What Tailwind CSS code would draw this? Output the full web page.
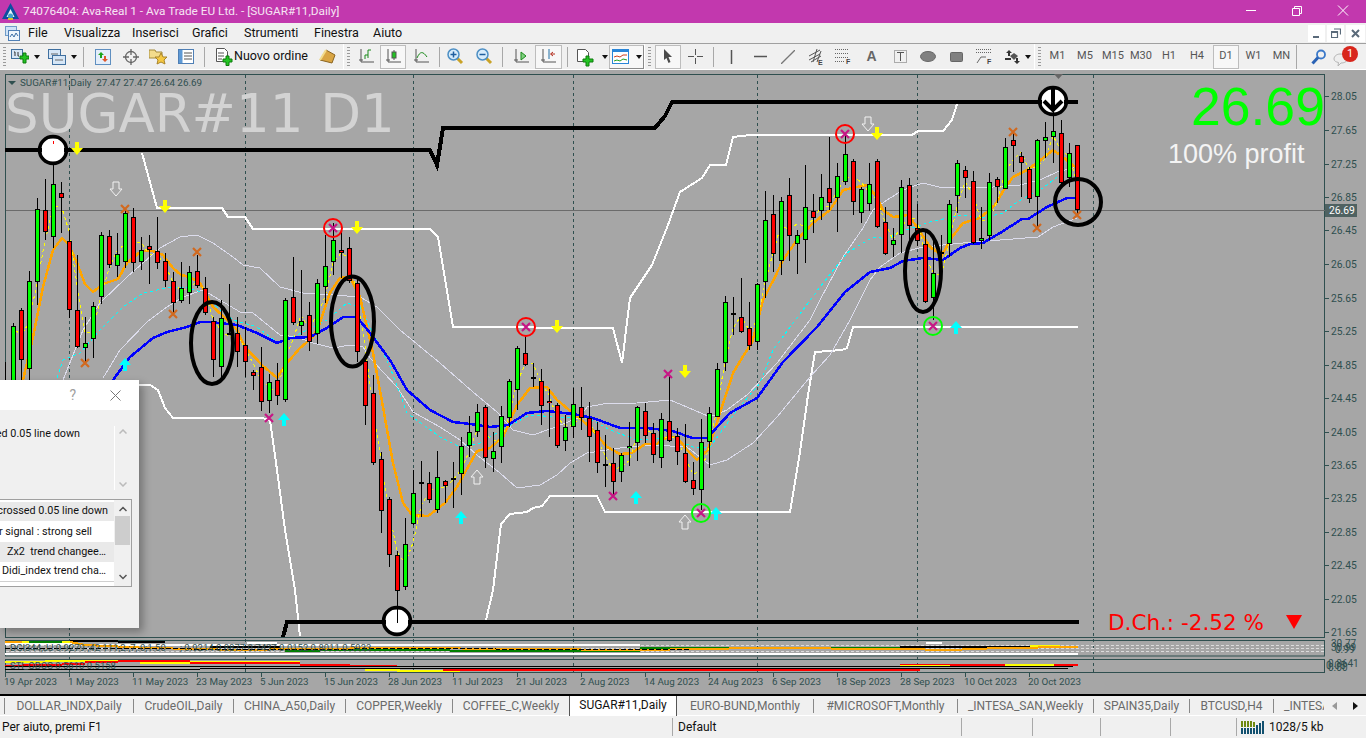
<!DOCTYPE html>
<html lang="it">
<head>
  <meta charset="UTF-8" />
  <title>74076404: Ava-Real 1 - Ava Trade EU Ltd. - [SUGAR#11,Daily]</title>
  <script src="https://cdn.jsdelivr.net/npm/@tailwindcss/browser@4"></script>
</head>
<body class="w-[1366px] h-[738px] overflow-hidden bg-[#f0f0f0] font-['Roboto',sans-serif] text-[12px] text-black">
<div class="flex flex-col h-[738px]">

  <!-- title bar -->
  <div class="h-[23px] bg-[#c238ae] flex items-center text-white shrink-0">
    <svg class="ml-[2px] w-[17px] h-[17px]" viewBox="0 0 17 17"><path d="M8.500 0 L17 16 H0 Z" fill="#0d4fa0"/><path d="M8.500 6 L12.500 14 H4.500 Z" fill="#e8f4f8"/><circle cx="8.500" cy="13" r="2.500" fill="#3fa3c9"/><path d="M6 15h5v2H6z" fill="#d8c22a"/></svg>
    <span class="ml-[4px] text-[11.800px] text-[#f6e4f3] whitespace-nowrap">74076404: Ava-Real 1 - Ava Trade EU Ltd. - [SUGAR#11,Daily]</span>
    <div class="ml-auto flex items-center">
      <svg class="w-[46px] h-[23px]" viewBox="0 0 46 23"><path d="M18 10.500h10" stroke="#fff"/></svg>
      <svg class="w-[46px] h-[23px]" viewBox="0 0 46 23" fill="none" stroke="#fff"><path d="M18.500 8.500h7v7h-7zM20.500 8.500v-2h7v7h-2"/></svg>
      <svg class="w-[46px] h-[23px]" viewBox="0 0 46 23" fill="none" stroke="#fff"><path d="M18 5.500l10 10M28 5.500l-10 10"/></svg>
    </div>
  </div>

  <!-- menu bar -->
  <div class="h-[21px] border-b border-[#a0a0a0] flex items-center shrink-0 text-[12.500px] text-[#111]">
    <span class="w-[28px] pl-[5px]"><svg class="w-[15px] h-[15px]" viewBox="0 0 15 15" fill="none"><rect x="0.500" y="0.500" width="11" height="9" fill="#cfe3f7" stroke="#6f9bc8"/><rect x="3.500" y="4.500" width="11" height="10" fill="#eef5fc" stroke="#4f7fb5"/><path d="M5 11l2-3 2 3 2-4 2 3" stroke="#3b6ea5"/></svg></span>
    <span class="w-[36px]">File</span>
    <span class="w-[68px]">Visualizza</span>
    <span class="w-[60px]">Inserisci</span>
    <span class="w-[52px]">Grafici</span>
    <span class="w-[70px]">Strumenti</span>
    <span class="w-[59px]">Finestra</span>
    <span>Aiuto</span>
    <div class="ml-auto flex gap-[2px] pr-[1px]">
      <span class="w-[17px] h-[17px] bg-white flex items-center justify-center"><svg class="w-[9px] h-[9px]" viewBox="0 0 9 9"><path d="M1 7h6v2H1z" fill="#5a6a7a"/></svg></span>
      <span class="w-[17px] h-[17px] bg-white flex items-center justify-center"><svg class="w-[10px] h-[10px]" viewBox="0 0 10 10" fill="none" stroke="#5a6a7a" stroke-width="1.200"><path d="M.5 3.500h6v6h-6zM3 1h6.500v5.500"/><path d="M.5 4h6" stroke-width="2"/></svg></span>
      <span class="w-[19px] h-[17px] bg-white flex items-center justify-center"><svg class="w-[9px] h-[9px]" viewBox="0 0 9 9" stroke="#5a6a7a" stroke-width="2"><path d="M1 1l7 7M8 1l-7 7"/></svg></span>
    </div>
  </div>

  <!-- toolbar -->
  <div class="h-[26px] flex items-center shrink-0 text-[#4a4a4a] border-b border-white">
    <span class="w-[8px] flex justify-center"><span class="w-[3px] h-[20px] bg-[repeating-linear-gradient(#9a9a9a_0_1px,transparent_1px_3px)]"></span></span>
    <span class="w-[34px] flex items-center pl-[3px] gap-[5px]">
      <svg class="w-[18px] h-[18px]" viewBox="0 0 18 18"><rect x=".5" y="1.500" width="11" height="9" fill="#d6e6f6" stroke="#3f6f9f"/><path d="M3 4h1v4M7 4v4h1" stroke="#333" fill="none"/><path d="M9 8h3V5h3v3h3v3h-3v4h-3v-4H9z" fill="#22c322" stroke="#0d7a0d"/></svg>
      <svg class="w-[6px] h-[4px]" viewBox="0 0 6 4"><path d="M0 0h6L3 4z" fill="#111"/></svg>
    </span>
    <span class="w-[36px] flex items-center pl-[6px] gap-[5px]">
      <svg class="w-[18px] h-[18px]" viewBox="0 0 18 18" fill="#d6e6f6" stroke="#3f6f9f"><rect x=".5" y="1.500" width="12" height="9"/><rect x="4.500" y="7.500" width="13" height="9"/><path d="M7 12h8M3 6h7" stroke="#666"/></svg>
      <svg class="w-[6px] h-[4px]" viewBox="0 0 6 4"><path d="M0 0h6L3 4z" fill="#111"/></svg>
    </span>
    <span class="w-[11px] flex justify-center"><span class="w-[1px] h-[20px] bg-[#a8a8a8]"></span></span>
    <span class="w-[27px] flex justify-center"><svg class="w-[16px] h-[16px]" viewBox="0 0 16 16"><rect x=".5" y=".5" width="15" height="15" fill="#e4eefa" stroke="#5f8fc0"/><path d="M6 3l-3 3h2v3h2V6h2z" fill="#1da51d"/><path d="M10 13l3-3h-2V7H9v3H7z" fill="#e0562a"/></svg></span>
    <span class="w-[29px] flex justify-center"><svg class="w-[18px] h-[18px]" viewBox="0 0 18 18" fill="none" stroke="#666" stroke-width="1.300"><circle cx="9" cy="9" r="5.500"/><path d="M9 1v6M9 11v6M1 9h6M11 9h6"/></svg></span>
    <span class="w-[27px] flex justify-center"><svg class="w-[19px] h-[17px]" viewBox="0 0 19 17"><path d="M0 2h6l1 2h6v6H0z" fill="#f3dc8c" stroke="#a48a3a"/><path d="M12 5l2 4h4l-3 3 1 4-4-2-4 2 1-4-3-3h4z" fill="#f5c842" stroke="#a8842a"/></svg></span>
    <span class="w-[28px] flex justify-center"><svg class="w-[16px] h-[15px]" viewBox="0 0 16 15"><rect x=".5" y=".5" width="15" height="14" fill="#fff" stroke="#4f7fb5"/><rect x="1" y="1" width="3.500" height="13" fill="#5f9ad5"/><path d="M6 4h8M6 7h8M6 10h8" stroke="#555"/></svg></span>
    <span class="w-[8px] flex justify-center"><span class="w-[1px] h-[20px] bg-[#a8a8a8]"></span></span>
    <span class="w-[25px] flex justify-end"><svg class="w-[18px] h-[18px]" viewBox="0 0 18 18"><path d="M1.500.5h8l3 3v10h-11z" fill="#fff" stroke="#555"/><path d="M3 5h6M3 8h6M3 11h4" stroke="#555"/><path d="M8 11h3V8h3v3h3v3h-3v3.500h-3V14H8z" fill="#22c322" stroke="#0d7a0d"/></svg></span>
    <span class="w-[78px] pl-[1px] text-[12.500px] text-[#111] whitespace-nowrap">Nuovo ordine</span>
    <span class="w-[32px] flex justify-center"><svg class="w-[17px] h-[15px]" viewBox="0 0 17 15"><path d="M7 1l9 5-3 8-12-3z" fill="#d9a544" stroke="#8a6420"/><path d="M1 11l6-10" stroke="#f3dc8c" stroke-width="2"/></svg></span>
    <span class="w-[9px] h-[26px] flex items-center gap-[3px]"><span class="w-[1px] h-[26px] bg-white"></span><span class="w-[3px] h-[20px] bg-[repeating-linear-gradient(#9a9a9a_0_1px,transparent_1px_3px)]"></span></span>
    <span class="w-[28px] flex justify-center"><svg class="w-[15px] h-[15px]" viewBox="0 0 15 15" fill="none" stroke="#555"><path d="M2 0v13h13M0 11h4"/><path d="M6 10V6h3M9 9V1h3" stroke="#1a8a1a"/></svg></span>
    <span class="w-[26px] h-[24px] flex justify-center items-center border border-[#bdbdbd] bg-[#f7f7f7]"><svg class="w-[15px] h-[15px]" viewBox="0 0 15 15" fill="none" stroke="#555"><path d="M2 0v13h13M0 11h4"/><path d="M8 1v10"/><rect x="6" y="3" width="4" height="6" fill="#22c322"/></svg></span>
    <span class="w-[31px] flex justify-center"><svg class="w-[15px] h-[15px]" viewBox="0 0 15 15" fill="none" stroke="#555"><path d="M2 0v13h13M0 11h4"/><path d="M3 9c3-7 6-7 10-1" stroke="#1a8a1a"/></svg></span>
    <span class="w-[4px] flex justify-center"><span class="w-[1px] h-[20px] bg-[#a8a8a8]"></span></span>
    <span class="w-[29px] flex justify-center"><svg class="w-[17px] h-[17px]" viewBox="0 0 17 17" fill="none"><path d="M10 10l5 5" stroke="#c9a227" stroke-width="3"/><circle cx="6.500" cy="6.500" r="5.500" fill="#d7ecfb" stroke="#4d8fc4" stroke-width="1.500"/><path d="M3.500 6.500h6M6.500 3.500v6" stroke="#1f5f9f" stroke-width="1.500"/></svg></span>
    <span class="w-[28px] flex justify-center"><svg class="w-[17px] h-[17px]" viewBox="0 0 17 17" fill="none"><path d="M10 10l5 5" stroke="#c9a227" stroke-width="3"/><circle cx="6.500" cy="6.500" r="5.500" fill="#d7ecfb" stroke="#4d8fc4" stroke-width="1.500"/><path d="M3.500 6.500h6" stroke="#1f5f9f" stroke-width="1.500"/></svg></span>
    <span class="w-[9px] flex justify-center"><span class="w-[1px] h-[20px] bg-[#a8a8a8]"></span></span>
    <span class="w-[28px] flex justify-center"><svg class="w-[15px] h-[15px]" viewBox="0 0 15 15" fill="none" stroke="#555"><path d="M2 0v13h13M0 11h4"/><path d="M7 3l5 4-5 4z" fill="#7fd07f" stroke="#1a8a1a"/></svg></span>
    <span class="w-[27px] h-[24px] flex justify-center items-center border border-[#bdbdbd] bg-[#f7f7f7]"><svg class="w-[15px] h-[15px]" viewBox="0 0 15 15" fill="none" stroke="#555"><path d="M2 0v13h13M0 11h4"/><path d="M8 0v10" stroke="#1f6fa5"/><path d="M14 5H10M12 3L9.500 5l2.500 2" stroke="#b22a1a"/></svg></span>
    <span class="w-[10px] flex justify-center"><span class="w-[1px] h-[20px] bg-[#a8a8a8]"></span></span>
    <span class="w-[34px] flex items-center pl-[4px] gap-[7px]">
      <svg class="w-[19px] h-[20px] shrink-0" viewBox="0 0 19 20"><path d="M1.500 2.500h8l3 3v9h-11z" fill="#fff" stroke="#555"/><path d="M7 12h3V9h3v3h4v3h-4v4h-3v-4H7z" fill="#22c322" stroke="#0d7a0d"/></svg>
      <svg class="w-[6px] h-[4px] shrink-0" viewBox="0 0 6 4"><path d="M0 0h6L3 4z" fill="#111"/></svg>
    </span>
    <span class="w-[3px]"></span>
    <span class="w-[35px] h-[24px] flex items-center pl-[2px] gap-[7px] border border-[#bdbdbd] border-b-[#8a8a8a] border-r-[#8a8a8a] bg-[#f7f7f7]">
      <svg class="w-[17px] h-[15px]" viewBox="0 0 17 15"><rect x=".5" y=".5" width="16" height="14" fill="#fff" stroke="#2a86d8"/><rect x="1" y="1" width="15" height="2" fill="#2a86d8"/><path d="M2 8l3-1 3 1 3-2 4 0" stroke="#d04020" fill="none"/><path d="M2 12l3-1 3 1 3-2 4 1" stroke="#22a022" fill="none"/></svg>
      <svg class="w-[6px] h-[4px]" viewBox="0 0 6 4"><path d="M0 0h6L3 4z" fill="#111"/></svg>
    </span>
    <span class="w-[11px] flex items-center gap-[3px]"><span class="w-[1px] h-[26px] bg-white"></span><span class="w-[3px] h-[20px] bg-[repeating-linear-gradient(#9a9a9a_0_1px,transparent_1px_3px)]"></span></span>
    <span class="w-[26px] h-[24px] flex justify-center items-center border border-[#bdbdbd] bg-[#f7f7f7]"><svg class="w-[10px] h-[15px]" viewBox="0 0 10 15"><path d="M1 0l8 8H5.500l2 5-2 1-2-5L1 11z" fill="#4a4a4a"/></svg></span>
    <span class="w-[28px] flex justify-center"><svg class="w-[15px] h-[15px]" viewBox="0 0 15 15" stroke="#555"><path d="M7.500 0v6M7.500 9v6M0 7.500h6M9 7.500h6"/></svg></span>
    <span class="w-[8px] flex justify-center"><span class="w-[1px] h-[20px] bg-[#a8a8a8]"></span></span>
    <span class="w-[29px] flex justify-center"><svg class="w-[3px] h-[14px]" viewBox="0 0 3 14"><path d="M1.500 0v14" stroke="#555" stroke-width="1.500"/></svg></span>
    <span class="w-[28px] flex justify-center"><svg class="w-[13px] h-[3px]" viewBox="0 0 13 3"><path d="M0 1.500h13" stroke="#555" stroke-width="1.500"/></svg></span>
    <span class="w-[28px] flex justify-center"><svg class="w-[14px] h-[14px]" viewBox="0 0 14 14"><path d="M0 14L14 0" stroke="#777" stroke-width="1.300"/></svg></span>
    <span class="w-[27px] flex justify-center"><svg class="w-[16px] h-[17px]" viewBox="0 0 16 17" fill="none" stroke="#555"><path d="M1 8l11-6M1 12l11-6M3 14l10-6M5 14L9 1M9 14l4-11"/><text x="10" y="17" font-size="7" font-weight="700" fill="#444" stroke="none" font-family="Liberation Sans">E</text></svg></span>
    <span class="w-[28px] flex justify-center"><svg class="w-[16px] h-[17px]" viewBox="0 0 16 17" fill="none" stroke="#666" stroke-dasharray="1 1"><path d="M0 1.500h13M0 5.500h13M0 9.500h13"/><text x="11" y="16" font-size="7" font-weight="700" fill="#444" stroke="none" font-family="Liberation Sans">F</text><path d="M0 13.500h9"/></svg></span>
    <span class="w-[29px] flex justify-center text-[14px] font-bold text-[#666] font-['Liberation_Sans',sans-serif]">A</span>
    <span class="w-[28px] flex justify-center"><svg class="w-[15px] h-[15px]" viewBox="0 0 15 15" fill="none"><rect x="1.500" y="1.500" width="12" height="12" stroke="#666" stroke-dasharray="1 1"/><path d="M7.500 3v9M4 3.500h7" stroke="#555"/></svg></span>
    <span class="w-[28px] flex justify-center"><svg class="w-[16px] h-[11px]" viewBox="0 0 16 11"><ellipse cx="8" cy="5.500" rx="7.500" ry="5" fill="#808080" stroke="#666"/></svg></span>
    <span class="w-[28px] flex justify-center"><svg class="w-[13px] h-[10px]" viewBox="0 0 13 10"><rect x=".5" y=".5" width="12" height="9" rx="1" fill="#808080" stroke="#666"/></svg></span>
    <span class="w-[28px] flex justify-center"><svg class="w-[17px] h-[17px]" viewBox="0 0 17 17" fill="none" stroke="#666"><path d="M0 1.500h15M0 4.500h15" stroke-dasharray="1 1"/><path d="M1 15l4-6h5"/><text x="11" y="16" font-size="7" font-weight="700" fill="#444" stroke="none" font-family="Liberation Sans">F</text></svg></span>
    <span class="w-[36px] flex items-center pl-[7px] gap-[5px]">
      <svg class="w-[15px] h-[14px]" viewBox="0 0 15 14" fill="#333"><path d="M4 0l3 3H5v3H3V3H1zM0 8h6v2H0zM12 14l-3-3h2V8h2v3h2z"/><path d="M5 6l4 4 4-4-4-3z" fill="#555"/></svg>
      <svg class="w-[6px] h-[4px]" viewBox="0 0 6 4"><path d="M0 0h6L3 4z" fill="#111"/></svg>
    </span>
    <span class="w-[10px] flex items-center gap-[3px]"><span class="w-[1px] h-[26px] bg-white"></span><span class="w-[3px] h-[20px] bg-[repeating-linear-gradient(#9a9a9a_0_1px,transparent_1px_3px)]"></span></span>
    <span class="w-[27px] text-center text-[11px] text-[#555]">M1</span>
    <span class="w-[28px] text-center text-[11px] text-[#555]">M5</span>
    <span class="w-[28px] text-center text-[11px] text-[#555]">M15</span>
    <span class="w-[28px] text-center text-[11px] text-[#555]">M30</span>
    <span class="w-[28px] text-center text-[11px] text-[#555]">H1</span>
    <span class="w-[28px] text-center text-[11px] text-[#555]">H4</span>
    <span class="w-[2px]"></span>
    <span class="w-[26px] h-[24px] flex items-center justify-center border border-[#bdbdbd] bg-[#f7f7f7] text-[11px] text-[#555]">D1</span>
    <span class="w-[29px] text-center text-[11px] text-[#555]">W1</span>
    <span class="w-[27px] text-center text-[11px] text-[#555]">MN</span>
    <span class="w-[3px] flex justify-center"><span class="w-[1px] h-[24px] bg-[#a8a8a8]"></span></span>
    <span class="w-[40px] flex justify-center"><svg class="w-[15px] h-[16px]" viewBox="0 0 15 16" fill="none"><circle cx="10" cy="5.500" r="4" stroke="#3a78c9" stroke-width="1.800"/><path d="M7 8.500L1.500 14.500" stroke="#2a62b5" stroke-width="3"/></svg></span>
    <span class="relative w-[28px] h-[24px]">
      <svg class="absolute left-[-5px] top-[8px] w-[16px] h-[14px]" viewBox="0 0 16 14"><path d="M7 1c4 0 7 2 7 5s-3 4-6 4l-3 3 .5-3.500C3 9 1 8 1 6c0-3 3-5 6-5z" fill="#eee" stroke="#b5b5b5"/></svg>
      <span class="absolute left-[4px] top-[1px] w-[16px] h-[16px] rounded-full bg-[#d8261c] text-white text-[11px] leading-[16px] text-center">1</span>
    </span>
  </div>

  <!-- chart area -->
  <div class="relative h-[626px] shrink-0 bg-[#a6a6a6] overflow-hidden border-b-2 border-black">
    <svg id="chart" class="absolute left-0 top-0 w-[1366px] h-[624px]" viewBox="0 70 1366 624" font-family="Roboto, sans-serif"></svg>

    <!-- alert window -->
    <div class="absolute left-0 top-[310px] w-[139px] h-[248px] bg-[#f0f0f0] shadow-[4px_4px_8px_rgba(0,0,0,0.3)] overflow-hidden text-[#111] text-[10.800px]">
      <div class="h-[30px] bg-white flex items-center justify-end text-[#a0a0a0]">
        <span class="text-[14px] mr-[34px]">?</span>
        <svg class="w-[11px] h-[11px] mr-[18px]" viewBox="0 0 11 11" stroke="#777"><path d="M.5.5l10 10M10.500.5l-10 10"/></svg>
      </div>
      <div class="h-[89px] flex relative">
        <div class="absolute right-[59px] top-[16px] whitespace-nowrap">ed 0.05 line down</div>
        <div class="absolute right-[8px] top-[16px] w-[17px] h-[64px] border-l border-white flex flex-col items-center justify-between py-[3px]">
          <svg class="w-[8px] h-[5px]" viewBox="0 0 8 5" fill="none" stroke="#bbb" stroke-width="1.500"><path d="M.5 4.500L4 1l3.500 3.500"/></svg>
          <svg class="w-[8px] h-[5px]" viewBox="0 0 8 5" fill="none" stroke="#bbb" stroke-width="1.500"><path d="M.5.500L4 4l3.500-3.500"/></svg>
        </div>
      </div>
      <div class="w-[132px] h-[88px] border border-[#a0a0a0] border-l-0 bg-white flex">
        <div class="w-[114px] pt-[2px]">
          <div class="h-[20px] bg-[#e9e9e9] border-b border-white flex justify-end items-center pr-[6px] whitespace-nowrap">crossed 0.05 line down</div>
          <div class="h-[20px] flex justify-end items-center pr-[22px] whitespace-nowrap">r signal : strong sell</div>
          <div class="h-[20px] bg-[#e9e9e9] flex items-center pr-[8px] justify-end whitespace-nowrap">Zx2&nbsp; trend changee…</div>
          <div class="h-[20px] border-b border-[#d0d0d0] flex items-center pr-[8px] justify-end whitespace-nowrap">Didi_index trend cha…</div>
        </div>
        <div class="w-[17px] bg-[#f0f0f0] flex flex-col items-center pt-[2px]">
          <svg class="w-[8px] h-[14px]" viewBox="0 0 8 14" fill="none" stroke="#555" stroke-width="1.500"><path d="M.5 9L4 5.500 7.500 9"/></svg>
          <div class="w-[15px] h-[29px] bg-[#cdcdcd]"></div>
          <svg class="w-[8px] h-[14px] mt-[25px]" viewBox="0 0 8 14" fill="none" stroke="#555" stroke-width="1.500"><path d="M.5 5L4 8.500 7.500 5"/></svg>
        </div>
      </div>
    </div>
  </div>

  <!-- chart tabs -->
  <div class="h-[20px] border-b border-white flex items-center shrink-0 text-[12px] text-[#6a6a6a] relative whitespace-nowrap">
    <span class="w-[5px] h-[16px] border-r border-[#888]"></span>
    <span class="w-[129px] h-[14px] leading-[14px] border-r border-[#888] text-center">DOLLAR_INDX,Daily</span>
    <span class="w-[100px] h-[14px] leading-[14px] border-r border-[#888] text-center">CrudeOIL,Daily</span>
    <span class="w-[112px] h-[14px] leading-[14px] border-r border-[#888] text-center">CHINA_A50,Daily</span>
    <span class="w-[107px] h-[14px] leading-[14px] border-r border-[#888] text-center">COPPER,Weekly</span>
    <span class="w-[116px] h-[14px] leading-[14px] text-center">COFFEE_C,Weekly</span>
    <span class="w-[108px] h-[20px] leading-[19px] bg-white text-[#111] border-x border-[#555] text-center">SUGAR#11,Daily</span>
    <span class="w-[137px] h-[14px] leading-[14px] border-r border-[#888] text-center">EURO-BUND,Monthly</span>
    <span class="w-[144px] h-[14px] leading-[14px] border-r border-[#888] text-center">#MICROSOFT,Monthly</span>
    <span class="w-[136px] h-[14px] leading-[14px] border-r border-[#888] text-center">_INTESA_SAN,Weekly</span>
    <span class="w-[96px] h-[14px] leading-[14px] border-r border-[#888] text-center">SPAIN35,Daily</span>
    <span class="w-[84px] h-[14px] leading-[14px] border-r border-[#888] text-center">BTCUSD,H4</span>
    <span class="pl-[10px]">_INTESA</span>
    <div class="absolute right-0 top-0 h-[19px] w-[42px] bg-[#f0f0f0] flex items-center justify-around">
      <svg class="w-[5px] h-[8px]" viewBox="0 0 5 8"><path d="M5 0v8L0 4z" fill="#999"/></svg>
      <svg class="w-[5px] h-[8px]" viewBox="0 0 5 8"><path d="M0 0v8l5-4z" fill="#111"/></svg>
    </div>
  </div>

  <!-- status bar -->
  <div class="h-[22px] shrink-0 flex items-center text-[12px] text-[#111] whitespace-nowrap">
    <span class="w-[672px] pl-[2px]">Per aiuto, premi F1</span>
    <span class="w-[289px] h-[18px] leading-[18px] border-l border-[#a8a8a8] pl-[5px]">Default</span>
    <span class="w-[71px] h-[18px] border-l border-[#a8a8a8]"></span>
    <span class="w-[68px] h-[18px] border-l border-[#a8a8a8]"></span>
    <span class="w-[70px] h-[18px] border-l border-[#a8a8a8]"></span>
    <span class="w-[66px] h-[18px] border-l border-[#a8a8a8]"></span>
    <span class="flex-1 h-[18px] border-l border-[#a8a8a8] flex items-center pl-[4px] gap-[5px]">
      <svg class="w-[23px] h-[14px]" viewBox="0 0 23 14">
        <path d="M0 1h2v6H0zM3 1h2v6H3zM6 1h2v6H6zM9 1h2v6H9zM12 2h2v5h-2z" fill="#6f8a12"/>
        <path d="M0 8h2v6H0zM3 8h2v6H3zM6 8h2v6H6zM9 8h2v6H9zM12 8h2v6h-2zM15 5h2v9h-2zM18 3h2v11h-2zM21 1h2v13h-2z" fill="#12506f"/>
      </svg>
      1028/5 kb
    </span>
  </div>
</div>

<script>
  const chart = document.getElementById('chart');
  let svg = '';

  const line = (pts, color, width, extra = '') => {
    svg += `<polyline points="${pts.map(p => p.join(',')).join(' ')}" fill="none" stroke="${color}" stroke-width="${width}" shape-rendering="crispEdges" ${extra}/>`;
  };
  const rect = (x, y, w, h, fill) => {
    svg += `<rect x="${x}" y="${y}" width="${w}" height="${h}" fill="${fill}" shape-rendering="crispEdges"/>`;
  };
  const text = (x, y, str, size, fill, extra = '') => {
    svg += `<text x="${x}" y="${y}" font-size="${size}" fill="${fill}" ${extra}>${str}</text>`;
  };

  // frames
  const teal = '#2f4f4f';
  svg += `<rect x="5.500" y="74.500" width="1319" height="563" fill="none" stroke="${teal}"/>`;
  svg += `<rect x="5.500" y="640.500" width="1319" height="15.500" fill="none" stroke="${teal}"/>`;
  svg += `<rect x="5.500" y="659.500" width="1319" height="13" fill="none" stroke="${teal}"/>`;

  // grid
  [69, 245, 413, 573, 757, 917, 1093].forEach(x => {
    svg += `<path d="M${x + .5} 75V672" stroke="${teal}" stroke-dasharray="3 3"/>`;
  });

  // price line
  rect(6, 210, 1319, 1, '#6b6b6b');

  // axis
  const prices = [['28.05',96],['27.65',130],['27.25',164],['26.85',197],['26.45',230],['26.05',264],['25.65',298],['25.25',331],['24.85',365],['24.45',398],['24.05',432],['23.65',465],['23.25',498],['22.85',532],['22.45',565],['22.05',599],['21.65',632]];
  prices.forEach(([p, y]) => {
    rect(1325, y, 4, 1, teal);
    text(1331, y + 4, p, 10.300, teal);
  });
  const dates = ['19 Apr 2023','1 May 2023','11 May 2023','23 May 2023','5 Jun 2023','15 Jun 2023','28 Jun 2023','11 Jul 2023','21 Jul 2023','2 Aug 2023','14 Aug 2023','24 Aug 2023','6 Sep 2023','18 Sep 2023','28 Sep 2023','10 Oct 2023','20 Oct 2023'];
  dates.forEach((d, i) => {
    const x = 5 + i * 64;
    rect(x, 673, 1, 4, teal);
    text(x - 1, 685, d, 9.800, teal);
  });

  // big labels
  const arial = 'font-family="Liberation Sans, sans-serif"';
  text(5, 132, 'SUGAR#11 D1', 53, '#d3d3d3', 'font-family="DejaVu Sans, sans-serif"');
  text(1191, 125, '26.69', 53.500, '#00ff00', arial);
  text(1168, 163, '100% profit', 27, '#f4f4f4', arial);
  text(1108, 630, 'D.Ch.: -2.52 %', 21.500, '#ff0000', 'font-family="DejaVu Sans, sans-serif"');
  svg += `<path d="M1286 615h16l-8 14z" fill="#ff0000"/>`;
  svg += `<path d="M8 81h8l-4 4z" fill="${teal}"/>`;
  text(20, 86, 'SUGAR#11,Daily&#160; 27.47 27.47 26.64 26.69', 9.800, teal);
  svg += `<path d="M1054 74h9l-4.500 5z" fill="#666"/>`;

  // thick levels
  line([[142,153],[157,208],[222,208],[228,217],[245,217],[253,229],[430,229],[438,237],[441,255],[453,327],[613,328],[622,363],[630,298],[652,265],[668,225],[680,192],[702,178],[710,165],[726,165],[733,137],[750,135],[912,135],[918,131],[943,131],[952,120],[957,104]], '#ffffff', 2);
  line([[139,385],[150,385],[158,390],[165,408],[173,418],[262,418],[270,420],[277,470],[285,530],[295,590],[300,636]], '#ffffff', 2);
  line([[486,620],[493,590],[497,557],[501,524],[510,514],[527,512],[533,508],[542,506],[550,496],[597,496],[605,512],[790,512],[800,452],[808,395],[815,352],[842,350],[847,348],[853,327],[1078,327]], '#ffffff', 2);
  line([[5,150],[430,150],[437,165],[443,128],[655,128],[665,116],[672,102],[1078,102]], '#000000', 4);
  line([[283,637],[287,622],[1079,622]], '#000000', 4);

  // envelopes
  const lav = '#dcdcec';
  line([[63,380],[83,330],[100,303],[127,277],[160,248],[180,237],[197,235],[213,243],[233,257],[243,265],[260,268],[280,287],[303,293],[333,295],[360,297],[377,307],[400,330],[440,363],[473,392],[497,412],[513,430],[533,435],[553,428],[580,417],[587,407],[603,404],[637,403],[670,400],[687,407],[710,417],[727,410],[747,395],[777,363],[810,320],[820,300],[843,257],[863,228],[873,210],[887,200],[903,190],[923,183],[943,188],[957,187],[993,187],[1020,185],[1040,180],[1057,172],[1077,167]], lav, 1);
  line([[103,378],[120,350],[147,322],[167,307],[183,297],[203,290],[220,300],[240,312],[253,313],[280,335],[297,337],[313,343],[333,348],[350,345],[363,347],[370,358],[397,387],[413,412],[440,427],[460,440],[477,455],[500,473],[517,488],[540,485],[557,475],[570,463],[587,453],[620,448],[653,445],[687,447],[710,465],[727,460],[753,443],[777,417],[810,377],[830,355],[850,320],[870,280],[880,267],[900,253],[923,247],[963,243],[1000,240],[1038,237],[1053,227],[1077,218]], lav, 1);
  line([[57,378],[63,360],[80,353],[100,330],[123,307],[143,293],[167,288],[187,287],[203,293],[220,310],[233,320],[257,327],[278,343],[293,337],[327,320],[347,303],[360,307],[373,333],[390,367],[407,413],[440,437],[460,447],[480,443],[507,427],[530,415],[557,417],[587,417],[610,430],[637,440],[670,437],[693,447],[710,447],[737,410],[760,383],[773,350],[820,287],[847,253],[873,237],[888,239],[897,233],[930,222],[960,215],[983,218],[1003,213],[1017,202],[1043,188],[1057,177]], '#00ffff', 1, 'stroke-dasharray="3 3"');

  // candles: [high, bodyTop, bodyBottom, low, colour], first one at x=13, 8px apart
  const candles = [
    [323,326,385,385,'g'],[308,310,360,380,'r'],[271,281,369,385,'g'],[198,209,282,305,'g'],[179,210,232,240,'r'],[163,184,237,248,'g'],[182,193,198,233,'r'],[230,241,310,318,'r'],
    [255,310,347,348,'r'],[317,343,348,363,'g'],[302,306,339,358,'g'],[232,235,297,304,'g'],[230,236,265,268,'r'],[233,254,266,277,'g'],[208,213,262,268,'g'],[208,217,263,272,'r'],
    [237,250,262,270,'g'],[235,246,250,284,'r'],[217,251,263,269,'r'],[253,261,281,287,'r'],[272,281,303,313,'r'],[262,288,301,303,'g'],[266,272,293,304,'g'],[255,271,286,288,'r'],
    [277,288,313,315,'r'],[317,321,360,377,'r'],[300,318,367,377,'g'],[284,333,333,335,'d'],[317,333,352,367,'r'],[327,345,362,377,'r'],[370,372,376,390,'r'],[347,367,402,411,'r'],
    [374,382,401,413,'g'],[363,380,396,405,'r'],[298,300,400,402,'g'],[257,297,323,325,'r'],[270,321,326,335,'g'],[302,315,342,351,'r'],[279,283,334,344,'g'],[235,266,287,303,'g'],
    [223,240,262,275,'g'],[228,250,253,278,'r'],[237,248,281,283,'r'],[278,283,352,362,'r'],[355,361,406,425,'r'],[375,393,463,465,'r'],[452,459,511,533,'r'],[497,499,555,567,'r'],
    [551,555,591,623,'r'],[518,544,587,590,'g'],[470,493,524,525,'g'],[461,482,482,517,'d'],[472,483,500,503,'r'],[451,477,510,513,'g'],[480,481,486,503,'r'],[462,478,478,508,'d'],
    [437,446,474,495,'g'],[416,432,446,457,'g'],[404,412,432,437,'g'],[405,407,458,468,'r'],[432,451,459,472,'g'],[406,416,447,463,'g'],[379,381,418,427,'g'],[346,348,390,410,'g'],
    [335,353,365,366,'r'],[363,377,377,387,'d'],[369,381,406,425,'r'],[389,401,403,437,'r'],[403,405,446,448,'r'],[415,427,441,451,'g'],[388,404,427,438,'g'],[387,407,418,430,'r'],
    [402,418,437,462,'r'],[422,430,463,473,'r'],[435,464,464,487,'d'],[448,463,482,495,'r'],[453,455,472,482,'g'],[422,446,448,466,'g'],[406,407,443,461,'g'],[403,411,436,443,'r'],
    [423,433,455,463,'r'],[413,419,458,468,'g'],[375,421,441,442,'r'],[428,436,452,465,'r'],[424,453,482,483,'r'],[462,480,489,495,'r'],[419,442,490,510,'g'],[407,413,442,468,'g'],
    [363,369,417,417,'g'],[296,302,363,371,'g'],[297,313,313,335,'d'],[278,317,332,333,'r'],[302,328,346,350,'r'],[283,284,342,350,'g'],[191,220,282,298,'g'],[195,214,254,272,'r'],
    [197,201,261,275,'g'],[178,195,236,261,'r'],[230,235,244,274,'g'],[165,207,240,263,'g'],[194,211,218,233,'r'],[174,197,211,220,'g'],[137,188,203,210,'r'],[163,176,198,232,'g'],
    [133,154,182,185,'g'],[159,161,202,215,'r'],[187,189,213,223,'g'],[163,184,204,211,'g'],[159,161,227,228,'r'],[207,222,254,255,'r'],[228,240,245,257,'g'],[180,187,235,253,'g'],
    [178,185,226,248,'r'],[204,228,241,246,'r'],[232,244,302,303,'r'],[238,273,298,320,'g'],[235,252,252,257,'d'],[200,204,244,257,'g'],[160,163,196,213,'g'],[166,170,178,198,'r'],
    [171,181,243,244,'r'],[207,238,241,249,'g'],[173,182,236,240,'g'],[177,179,187,203,'r'],[138,147,189,189,'g'],[132,140,146,172,'r'],[152,156,163,197,'r'],[167,169,199,203,'r'],
    [139,140,197,228,'g'],[122,137,141,158,'g'],[103,131,137,163,'g'],[120,133,183,185,'r'],[143,153,178,187,'g'],[145,145,210,215,'r']
  ];

  // yellow dashed average of the closes
  const closes = candles.map(c => c[4] === 'g' ? c[1] : c[2]);
  const fast = closes.map((c, i) => [13 + i * 8, Math.round((c + closes[Math.max(i - 1, 0)] + closes[Math.max(i - 2, 0)]) / 3)]);

  // orange and blue averages
  const orange = [[23,380],[33,337],[43,287],[53,250],[62,238],[69,245],[77,263],[85,284],[93,292],[103,284],[118,279],[127,263],[140,252],[150,250],[163,255],[173,268],[181,275],[190,277],[200,283],[213,307],[222,315],[237,330],[245,347],[262,365],[277,378],[287,363],[300,348],[313,337],[320,323],[330,293],[340,278],[350,277],[360,297],[373,353],[383,407],[393,463],[403,503],[412,515],[428,516],[445,503],[457,487],[468,467],[477,451],[490,448],[503,437],[517,405],[530,388],[547,387],[557,400],[573,413],[590,427],[607,447],[620,454],[632,453],[645,444],[657,444],[667,437],[677,437],[687,450],[697,460],[708,450],[720,413],[733,373],[742,358],[752,343],[763,300],[775,277],[783,260],[797,240],[813,223],[830,210],[843,190],[867,185],[877,197],[883,210],[893,217],[908,215],[917,227],[930,247],[942,255],[952,237],[963,223],[980,218],[995,205],[1005,188],[1013,177],[1027,170],[1038,162],[1053,150],[1063,157],[1075,167]];
  const blue = [[113,380],[130,357],[153,338],[167,332],[187,327],[200,322],[210,322],[237,325],[257,333],[277,343],[290,338],[310,337],[327,328],[343,317],[357,317],[370,333],[390,360],[407,390],[430,410],[453,422],[470,424],[490,427],[508,425],[527,413],[547,411],[573,414],[593,418],[620,428],[647,428],[673,431],[692,438],[707,438],[730,413],[757,398],[783,362],[817,327],[845,292],[870,272],[890,268],[903,261],[923,258],[943,260],[960,248],[970,244],[983,243],[1000,233],[1022,219],[1028,219],[1047,207],[1067,198],[1077,198]];
  line(orange, '#ffa500', 2.500);
  line(fast, '#ffff00', 1, 'stroke-dasharray="3 3"');
  line(blue, '#0000ff', 2.500);

  rect(5, 362, 1, 23, '#000');
  candles.forEach((c, i) => {
    const x = 13 + i * 8;
    rect(x, c[0], 1, c[3] - c[0], '#000');
    if (c[4] === 'd') { rect(x - 2, c[1], 5, 2, '#000'); return; }
    rect(x - 2, c[1], 5, c[2] - c[1], '#000');
    rect(x - 1, c[1] + 1, 3, Math.max(c[2] - c[1] - 2, 1), c[4] === 'g' ? '#00ff00' : '#ff0000');
  });

  // signals
  const arrowDown = (x, y, fill) => { svg += `<path d="M${x-2} ${y-7}h4v6h4l-6 7-6-7h4z" fill="${fill}"/>`; };
  const arrowUp = (x, y, fill) => { svg += `<path d="M${x-2} ${y+7}h4v-6h4l-6-7-6 7h4z" fill="${fill}"/>`; };
  const hollowDown = (x, y) => { svg += `<path d="M${x-3} ${y-7}h6v7h3l-6 7-6-7h3z" fill="none" stroke="#f2f2f2"/>`; };
  const hollowUp = (x, y) => { svg += `<path d="M${x-3} ${y+7}h6v-7h3l-6-7-6 7h3z" fill="none" stroke="#f2f2f2"/>`; };
  const cross = (x, y, col) => { svg += `<path d="M${x-4} ${y-4}l8 8M${x+4} ${y-4}l-8 8" stroke="${col}" stroke-width="2.200"/>`; };
  const ring = (x, y, col) => { svg += `<circle cx="${x}" cy="${y}" r="9" fill="none" stroke="${col}" stroke-width="2"/>`; };

  [[77,149],[165,207],[357,228],[557,327],[877,134],[685,372]].forEach(p => arrowDown(p[0], p[1], '#ffff00'));
  [[125,364],[284,419],[461,517],[636,497],[716,513],[956,327]].forEach(p => arrowUp(p[0], p[1], '#00ffff'));
  hollowDown(116, 189); hollowDown(868, 124);
  hollowUp(477, 477); hollowUp(685, 522);
  [[85,363],[125,209],[173,314],[197,252],[1013,132],[1037,228],[1077,215]].forEach(p => cross(p[0], p[1], '#d2691e'));
  [[269,418],[333,228],[526,327],[613,496],[668,374],[701,513],[845,134],[933,326]].forEach(p => cross(p[0], p[1], '#c71585'));
  [[333,228],[526,327],[845,134]].forEach(p => ring(p[0], p[1], '#ff0000'));
  [[701,513],[933,326]].forEach(p => ring(p[0], p[1], '#00ff00'));

  // hand drawn marks
  [[212,343,21,41],[352.500,321.500,21.500,45],[923,271,18,41],[1078,202,23,23]].forEach(e => {
    svg += `<ellipse cx="${e[0]}" cy="${e[1]}" rx="${e[2]}" ry="${e[3]}" fill="none" stroke="#000" stroke-width="4"/>`;
  });
  [[53,150],[397,621],[1053,101]].forEach(p => {
    rect(p[0] - 11, p[1] - 11, 22, 22, '#ffffff');
    svg += `<circle cx="${p[0]}" cy="${p[1]}" r="13.500" fill="none" stroke="#000" stroke-width="3.500"/>`;
  });
  rect(397, 606, 1, 17, '#000');
  rect(53, 141, 1, 3, '#f00');
  svg += `<path d="M1053 89v21M1044 101l9 9 9-9" fill="none" stroke="#000" stroke-width="4"/>`;

  // sub window 1
  [645, 648, 651].forEach(y => {
    svg += `<path d="M6 ${y + .5}H1324" stroke="#dcdcdc" stroke-dasharray="3 2"/>`;
  });
  const seg1 = [[5,80,643,'#fff'],[80,245,644,'#fff'],[247,277,642,'#fff'],[277,400,644,'#fff'],[400,640,644,'#fff'],[926,942,642,'#fff'],[5,1078,653,'#fff'],[5,22,641,'#ffa500'],[22,29,641,'#ffff00'],[29,62,641,'#008000'],[62,70,641,'#ffff00'],[70,118,640,'#000'],[118,165,641,'#000'],[285,320,650,'#008000'],[320,450,649,'#008000'],[450,640,650,'#008000'],[640,900,647,'#008000'],[948,1040,646,'#008000'],[210,280,646,'#000'],[900,1070,646,'#000'],[1030,1060,645,'#ffff00'],[1050,1078,646,'#ffa500']];
  seg1.forEach(s => rect(s[0], s[2], s[1] - s[0], 2, s[3]));
  line([[70,642],[85,645],[150,648],[240,650],[300,649],[400,648],[640,650],[760,648],[900,649],[950,650],[1000,648],[1078,647]], '#ffa500', 2);
  line([[5,648],[100,648],[280,650],[430,648],[560,650],[690,649]], '#000000', 1, 'stroke-dasharray="5 2"');
  text(10, 651, 'DCI344,JJ 0.9279 ;42 111;2.;7,.0;1.50', 9.500, teal);
  text(180, 651, '; 0.9214 0.8877 0.7437 0.0152 0.8011 0.5933', 9.500, teal);
  text(1331, 647, '30.77', 10, teal);
  text(1331, 651, '30.99', 10, teal);
  text(1335, 653, '0.99', 10, teal);

  // sub window 2
  const seg2 = [[5,22,661,'#ffff00'],[22,45,661,'#ffff00'],[45,70,660,'#ffff00'],[70,120,660,'#ffff00'],[140,190,662,'#ffff00'],[190,300,661,'#ffff00'],[5,22,665,'#ff0000'],[22,62,664,'#ff0000'],[62,85,663,'#ff0000'],[85,118,661,'#ff0000'],[118,190,660,'#ff0000'],[190,300,662,'#ff0000'],[300,350,664,'#ff0000'],[350,397,665,'#ff0000'],[365,400,669,'#ffff00'],[397,460,670,'#ffff00'],[443,900,668,'#ffff00'],[443,920,669,'#ff0000'],[900,1078,664,'#ff0000'],[1005,1054,664,'#ffff00'],[900,950,665,'#ffff00']];
  seg2.forEach(s => rect(s[0], s[2], s[1] - s[0], 2, s[3]));
  rect(5, 666, 195, 1, '#000'); rect(5, 669, 195, 1, '#000'); rect(153, 666, 920, 1, '#000'); rect(200, 668, 868, 1, '#000');
  text(10, 669, 'STI_OBOS 0.5610 0.5158', 9.500, teal);
  text(1328, 667, '0.8641', 10, teal);
  text(1326, 669, '0.05', 10, teal);
  text(1328, 671, '0.00', 10, teal);

  // current price tag
  rect(1325, 204, 32, 13, '#4f6262');
  text(1329, 214, '26.69', 10.300, '#ffffff');

  chart.innerHTML = svg;
</script>
</body>
</html>
